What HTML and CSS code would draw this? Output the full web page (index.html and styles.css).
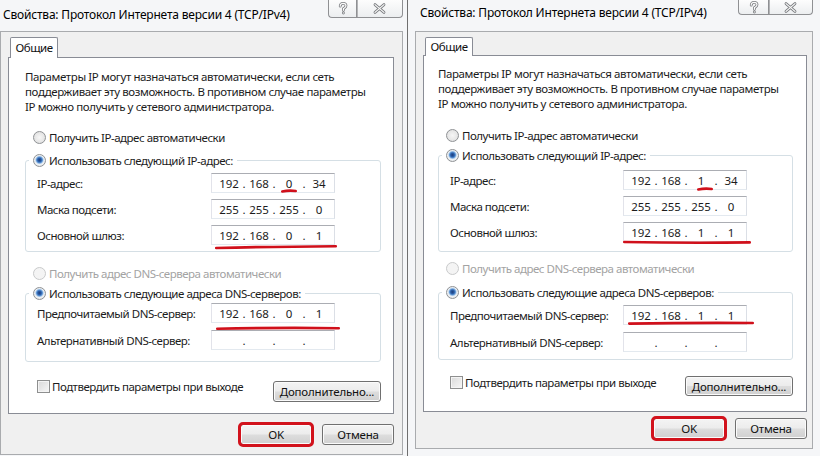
FILE: index.html
```html
<!DOCTYPE html>
<html lang="ru">
<head>
<meta charset="utf-8">
<title>Свойства: Протокол Интернета версии 4 (TCP/IPv4)</title>
<link rel="stylesheet" href="styles.css">
</head>
<body>
<main class="screen">

  <section class="win win--a">
    <header class="titlebar">
      <h1 class="title">Свойства: Протокол Интернета версии 4 (TCP/IPv4)</h1>
      <div class="caption">
        <span class="cap cap--help"><svg class="glyph" width="10" height="13" viewBox="0 0 10 13"><path class="g-out" d="M2.2 4.2 C2.2 2.3 3.4 1.3 5.1 1.3 C6.9 1.3 8 2.4 8 3.8 C8 5.3 6.6 5.8 5.4 6.6 L5.4 8.3 M5.4 10.9 L5.4 11"/><path class="g-in" d="M2.2 4.2 C2.2 2.3 3.4 1.3 5.1 1.3 C6.9 1.3 8 2.4 8 3.8 C8 5.3 6.6 5.8 5.4 6.6 L5.4 8.3 M5.4 10.9 L5.4 11"/></svg></span>
        <span class="cap cap--close"><svg class="glyph" width="13" height="11" viewBox="0 0 13 11"><path class="g-out" d="M2 1.6 L11 9.4 M11 1.6 L2 9.4"/><path class="g-in" d="M2 1.6 L11 9.4 M11 1.6 L2 9.4"/></svg></span>
      </div>
    </header>
    <div class="client">
      <div class="tabs"><span class="tab">Общие</span></div>
      <div class="panel">
        <p class="intro">Параметры IP могут назначаться автоматически, если сеть<br>поддерживает эту возможность. В противном случае параметры<br>IP можно получить у сетевого администратора.</p>
        <div class="radio radio--first"><span class="rb"></span>Получить IP-адрес автоматически</div>
        <fieldset class="group group--ip">
          <legend><span class="radio"><span class="rb rb--on"></span>Использовать следующий IP-адрес:</span></legend>
          <div class="row"><span class="lbl">IP-адрес:</span><span class="ip"><span class="seg">192</span><span class="dot">.</span><span class="seg">168</span><span class="dot">.</span><span class="seg">0</span><span class="dot">.</span><span class="seg">34</span><i class="mark mark--seg"><svg viewBox="0 0 100 6" preserveAspectRatio="none"><path d="M2 3.5 Q50 2 98 3"/></svg></i></span></div>
          <div class="row"><span class="lbl">Маска подсети:</span><span class="ip"><span class="seg">255</span><span class="dot">.</span><span class="seg">255</span><span class="dot">.</span><span class="seg">255</span><span class="dot">.</span><span class="seg">0</span></span></div>
          <div class="row"><span class="lbl">Основной шлюз:</span><span class="ip"><span class="seg">192</span><span class="dot">.</span><span class="seg">168</span><span class="dot">.</span><span class="seg">0</span><span class="dot">.</span><span class="seg">1</span><i class="mark mark--gw"><svg viewBox="0 0 100 6" preserveAspectRatio="none"><path d="M1 4 Q45 2.6 99 2.2"/></svg></i></span></div>
        </fieldset>
        <div class="radio radio--off"><span class="rb rb--off"></span>Получить адрес DNS-сервера автоматически</div>
        <fieldset class="group group--dns">
          <legend><span class="radio"><span class="rb rb--on"></span>Использовать следующие адреса DNS-серверов:</span></legend>
          <div class="row"><span class="lbl">Предпочитаемый DNS-сервер:</span><span class="ip"><span class="seg">192</span><span class="dot">.</span><span class="seg">168</span><span class="dot">.</span><span class="seg">0</span><span class="dot">.</span><span class="seg">1</span><i class="mark mark--dns"><svg viewBox="0 0 100 6" preserveAspectRatio="none"><path d="M1 3.8 Q50 2.4 99 3.2"/></svg></i></span></div>
          <div class="row"><span class="lbl">Альтернативный DNS-сервер:</span><span class="ip"><span class="seg"></span><span class="dot">.</span><span class="seg"></span><span class="dot">.</span><span class="seg"></span><span class="dot">.</span><span class="seg"></span></span></div>
        </fieldset>
        <div class="opts">
          <div class="check"><span class="cb"></span>Подтвердить параметры при выходе</div>
          <button class="btn btn--adv" type="button">Дополнительно...</button>
        </div>
      </div>
      <div class="actions">
        <button class="btn btn--ok" type="button">OK</button>
        <button class="btn" type="button">Отмена</button>
      </div>
    </div>
  </section>

  <section class="win win--b">
    <header class="titlebar">
      <h1 class="title">Свойства: Протокол Интернета версии 4 (TCP/IPv4)</h1>
      <div class="caption">
        <span class="cap cap--help"><svg class="glyph" width="10" height="13" viewBox="0 0 10 13"><path class="g-out" d="M2.2 4.2 C2.2 2.3 3.4 1.3 5.1 1.3 C6.9 1.3 8 2.4 8 3.8 C8 5.3 6.6 5.8 5.4 6.6 L5.4 8.3 M5.4 10.9 L5.4 11"/><path class="g-in" d="M2.2 4.2 C2.2 2.3 3.4 1.3 5.1 1.3 C6.9 1.3 8 2.4 8 3.8 C8 5.3 6.6 5.8 5.4 6.6 L5.4 8.3 M5.4 10.9 L5.4 11"/></svg></span>
        <span class="cap cap--close"><svg class="glyph" width="13" height="11" viewBox="0 0 13 11"><path class="g-out" d="M2 1.6 L11 9.4 M11 1.6 L2 9.4"/><path class="g-in" d="M2 1.6 L11 9.4 M11 1.6 L2 9.4"/></svg></span>
      </div>
    </header>
    <div class="client">
      <div class="tabs"><span class="tab">Общие</span></div>
      <div class="panel">
        <p class="intro">Параметры IP могут назначаться автоматически, если сеть<br>поддерживает эту возможность. В противном случае параметры<br>IP можно получить у сетевого администратора.</p>
        <div class="radio radio--first"><span class="rb"></span>Получить IP-адрес автоматически</div>
        <fieldset class="group group--ip">
          <legend><span class="radio"><span class="rb rb--on"></span>Использовать следующий IP-адрес:</span></legend>
          <div class="row"><span class="lbl">IP-адрес:</span><span class="ip"><span class="seg">192</span><span class="dot">.</span><span class="seg">168</span><span class="dot">.</span><span class="seg">1</span><span class="dot">.</span><span class="seg">34</span><i class="mark mark--seg"><svg viewBox="0 0 100 6" preserveAspectRatio="none"><path d="M2 3.5 Q50 2 98 3"/></svg></i></span></div>
          <div class="row"><span class="lbl">Маска подсети:</span><span class="ip"><span class="seg">255</span><span class="dot">.</span><span class="seg">255</span><span class="dot">.</span><span class="seg">255</span><span class="dot">.</span><span class="seg">0</span></span></div>
          <div class="row"><span class="lbl">Основной шлюз:</span><span class="ip"><span class="seg">192</span><span class="dot">.</span><span class="seg">168</span><span class="dot">.</span><span class="seg">1</span><span class="dot">.</span><span class="seg">1</span><i class="mark mark--gw"><svg viewBox="0 0 100 6" preserveAspectRatio="none"><path d="M1 3 Q50 4.2 99 3.4"/></svg></i></span></div>
        </fieldset>
        <div class="radio radio--off"><span class="rb rb--off"></span>Получить адрес DNS-сервера автоматически</div>
        <fieldset class="group group--dns">
          <legend><span class="radio"><span class="rb rb--on"></span>Использовать следующие адреса DNS-серверов:</span></legend>
          <div class="row"><span class="lbl">Предпочитаемый DNS-сервер:</span><span class="ip"><span class="seg">192</span><span class="dot">.</span><span class="seg">168</span><span class="dot">.</span><span class="seg">1</span><span class="dot">.</span><span class="seg">1</span><i class="mark mark--dns"><svg viewBox="0 0 100 6" preserveAspectRatio="none"><path d="M1 3.6 Q50 2.6 99 3"/></svg></i></span></div>
          <div class="row"><span class="lbl">Альтернативный DNS-сервер:</span><span class="ip"><span class="seg"></span><span class="dot">.</span><span class="seg"></span><span class="dot">.</span><span class="seg"></span><span class="dot">.</span><span class="seg"></span></span></div>
        </fieldset>
        <div class="opts">
          <div class="check"><span class="cb"></span>Подтвердить параметры при выходе</div>
          <button class="btn btn--adv" type="button">Дополнительно...</button>
        </div>
      </div>
      <div class="actions">
        <button class="btn btn--ok" type="button">OK</button>
        <button class="btn" type="button">Отмена</button>
      </div>
    </div>
  </section>

</main>
</body>
</html>
```

FILE: styles.css
```css
* { box-sizing: border-box; margin: 0; padding: 0; }
html, body { width: 820px; height: 456px; overflow: hidden; }
body {
  background: #ffffff;
  font-family: "Noto Sans", "Open Sans", sans-serif;
  font-size: 11.5px;
  letter-spacing: -0.48px;
  line-height: 15px;
  color: #1c1c1c;
}
.screen { display: flex; height: 456px; }

/* ---------- window ---------- */
.win {
  display: flex;
  flex-direction: column;
  height: 456px;
  background: #f5f6f8;
  /* per-window metrics */
  --tb: 31px;
  --title-pt: 7px;
  --title-pl: 3px;
  --cap-h: 18px;
  --help-w: 28px;
  --close-w: 47px;
  --cl-pr: 8px;
  --cl-pb: 9px;
  --tab-h: 21px;
  --pn-pt: 11px;
  --pn-pr: 12px;
  --pn-pb: 11px;
  --pn-pl: 16px;
  --r1-mt: 15px;
  --g1-mt: 7px;
  --g1-pt: 5px;
  --g1-pb: 6px;
  --r3-mt: 13px;
  --g2-mt: 4px;
  --g2-pt: 2px;
  --g2-pb: 11px;
  --opts-mt: 17px;
  --adv-mt: 2px;
  --adv-h: 21px;
  --act-mt: 10px;
  --lbl-w: 174px;
}
.win--a { width: 407px; padding-right: 4px; }
.win--b {
  width: 413px;
  border-left: 1px solid #6f6f6f;
  padding: 0 7px;
  --title-pt: 5px;
  --title-pl: 5px;
  --cap-h: 15px;
  --help-w: 30px;
  --close-w: 45px;
  --cl-pr: 5px;
  --cl-pb: 9px;
  --tab-h: 19px;
  --pn-pt: 10px;
  --pn-pr: 13px;
  --pn-pb: 15px;
  --pn-pl: 14px;
  --r1-mt: 16px;
  --g1-mt: 4px;
  --g1-pt: 7px;
  --g1-pb: 9px;
  --r3-mt: 8px;
  --g2-mt: 8px;
  --g2-pt: 5px;
  --g2-pb: 7px;
  --opts-mt: 15px;
  --adv-mt: 1px;
  --adv-h: 20px;
  --act-mt: 6px;
  --lbl-w: 173px;
}

/* ---------- title bar ---------- */
.titlebar { display: flex; align-items: flex-start; height: var(--tb); flex: none; }
.title {
  font-size: 12px;
  font-weight: normal;
  letter-spacing: -0.2px;
  line-height: 16px;
  color: #000;
  padding: var(--title-pt) 0 0 var(--title-pl);
  white-space: nowrap;
}
.caption { display: flex; margin-left: auto; height: var(--cap-h); }
.cap {
  display: flex;
  align-items: center;
  justify-content: center;
  height: 100%;
  border: 1px solid #8f9093;
  border-top: 0;
  background: linear-gradient(#fdfdfd, #eceef0);
}
.cap--help { width: var(--help-w); border-right: 0; border-radius: 0 0 0 4px; }
.cap--close { width: var(--close-w); border-radius: 0 0 4px 0; }
.cap--close { box-shadow: inset 1px 0 0 #b3b4b6; }
.glyph { display: block; overflow: visible; }
.glyph path { fill: none; stroke-linecap: round; stroke-linejoin: round; }
.g-out { stroke: #7b7d80; stroke-width: 2.8; }
.g-in { stroke: #fbfbfb; stroke-width: 1.2; }

/* ---------- client area ---------- */
.client {
  flex: none;
  border: 1px solid #a9abae;
  background: #f0f0f0;
  padding: 5px var(--cl-pr) var(--cl-pb) 7px;
}
.tabs { display: flex; padding-left: 2px; }
.tab {
  position: relative;
  z-index: 1;
  width: 48px;
  height: var(--tab-h);
  margin-bottom: -1px;
  border: 1px solid #898c95;
  border-bottom: 0;
  border-radius: 2px 2px 0 0;
  background: #fff;
  text-align: center;
  line-height: calc(var(--tab-h) - 2px);
  color: #111;
}
.panel {
  border: 1px solid #898c95;
  background: #fff;
  padding: var(--pn-pt) var(--pn-pr) var(--pn-pb) var(--pn-pl);
}
.intro { white-space: nowrap; line-height: 15px; letter-spacing: -0.4px; }

/* ---------- radios / checkbox ---------- */
.radio { display: flex; align-items: center; gap: 3px; height: 16px; white-space: nowrap; }
.radio--first { margin: var(--r1-mt) 0 0 8px; }
.radio--off { margin: var(--r3-mt) 0 0 8px; color: #a3a3a3; }
.rb {
  flex: none;
  width: 13px;
  height: 13px;
  border-radius: 50%;
  border: 1px solid #8f9295;
  background: radial-gradient(circle at 50% 50%, #f6f6f6 0, #e6e6e6 60%, #d4d4d4 100%);
}
.rb--on {
  background: radial-gradient(circle at 50% 45%, #1d3c78 0, #2b5ea8 1.8px, #5f97d6 3px, #b9d2ec 3.8px, #eef1f4 4.6px, #dedede 100%);
}
.rb--off { border-color: #c9cacb; background: #f4f4f4; }

.check { display: flex; align-items: center; gap: 2px; height: 15px; margin-left: 12px; white-space: nowrap; }
.cb {
  flex: none;
  width: 13px;
  height: 13px;
  border: 1px solid #8e8f8f;
  background: linear-gradient(135deg, #d9d9d9, #f7f7f7);
  box-shadow: inset 0 0 0 1px #f4f4f4;
}

/* ---------- group boxes ---------- */
.group {
  border: 1px solid #d5dfe5;
  border-radius: 3px;
  padding: 0;
  min-width: 0;
}
.group legend { margin-left: 3px; padding: 0 4px; }
.group--ip { margin-top: var(--g1-mt); padding-top: var(--g1-pt); padding-bottom: var(--g1-pb); }
.group--dns { margin-top: var(--g2-mt); padding-top: var(--g2-pt); padding-bottom: var(--g2-pb); }
.row { display: flex; align-items: center; height: 20px; padding-left: 11px; }
.row + .row { margin-top: 6px; }
.group--dns .row + .row { margin-top: 7px; }
.lbl { width: var(--lbl-w); white-space: nowrap; }

/* ---------- IP fields ---------- */
.ip {
  position: relative;
  display: flex;
  align-items: center;
  width: 124px;
  height: 20px;
  padding-left: 3px;
  border: 1px solid;
  border-color: #abadb3 #dbdfe6 #e3e9ef #e2e3ea;
  background: #fff;
  letter-spacing: 0;
}
.seg { width: 28px; text-align: center; }
.dot { width: 2px; display: flex; justify-content: center; }

/* red annotation strokes drawn over the fields */
.mark { position: absolute; display: block; height: 6px; pointer-events: none; }
.mark svg { display: block; width: 100%; height: 100%; overflow: visible; }
.mark path { fill: none; stroke: #d0101b; stroke-width: 2.6; stroke-linecap: round; vector-effect: non-scaling-stroke; }
.win--a .mark--seg { left: 70px; top: 14px; width: 14px; }
.win--a .mark--gw { left: 3px; top: 18px; width: 122px; }
.win--a .mark--dns { left: 4px; top: 21px; width: 124px; }
.win--b .mark--seg { left: 74px; top: 15px; width: 14px; }
.win--b .mark--gw { left: -1px; top: 16px; width: 128px; }
.win--b .mark--dns { left: 4px; top: 14px; width: 126px; }

/* ---------- buttons ---------- */
.opts { display: flex; justify-content: space-between; align-items: flex-start; margin-top: var(--opts-mt); }
.btn {
  font: inherit;
  letter-spacing: -0.2px;
  color: #111;
  height: 21px;
  border: 1px solid #707070;
  border-radius: 3px;
  background: linear-gradient(#f4f4f4 0, #ececec 48%, #dddddd 52%, #d0d0d0 100%);
  box-shadow: inset 0 0 0 1px #fbfbfb;
  text-align: center;
}
.btn--adv { width: 108px; height: var(--adv-h); margin-top: var(--adv-mt); }
.actions { display: flex; justify-content: flex-end; gap: 10px; margin-top: var(--act-mt); }
.actions .btn { width: 72px; }
.btn--ok { outline: 3px solid #d2121c; outline-offset: -1px; }
```
